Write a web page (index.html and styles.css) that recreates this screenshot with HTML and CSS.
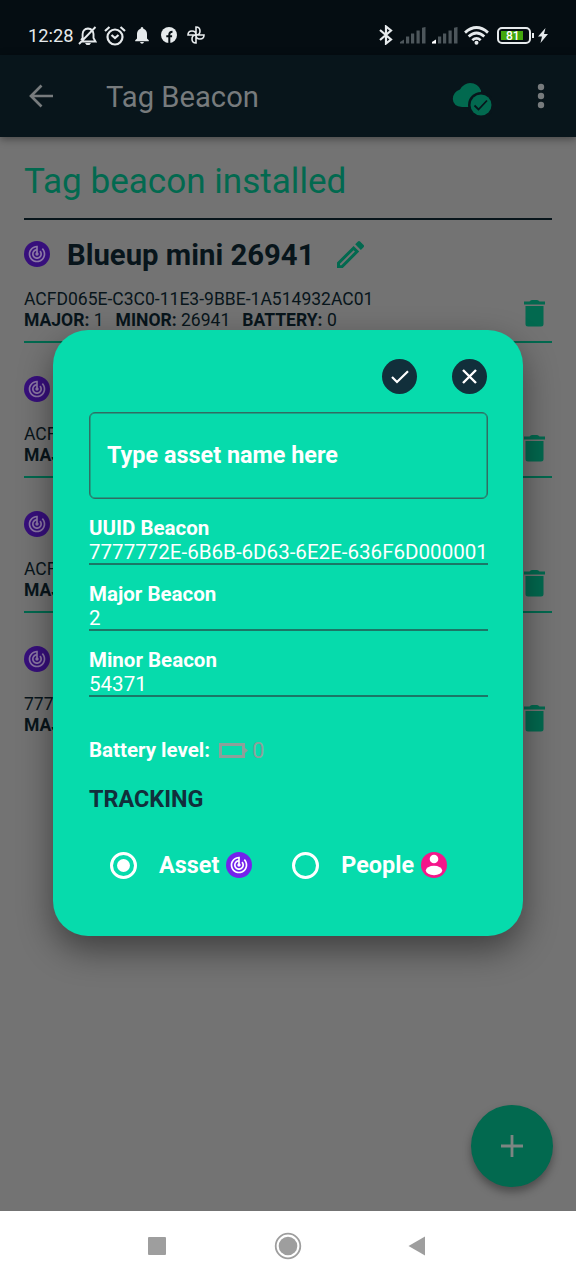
FILE: index.html
```html
<!DOCTYPE html>
<html lang="en">
<head>
<meta charset="utf-8">
<title>Tag Beacon</title>
<link rel="stylesheet" href="styles.css">
</head>
<body>
<svg class="defs" width="0" height="0">
  <symbol id="track" viewBox="0 0 24 24"><path fill="currentColor" d="M19.07 4.93l-1.41 1.41C19.1 7.79 20 9.79 20 12c0 4.42-3.58 8-8 8s-8-3.58-8-8c0-4.08 3.05-7.44 7-7.93v2.02C8.16 6.57 6 9.03 6 12c0 3.31 2.69 6 6 6s6-2.69 6-6c0-1.66-.67-3.16-1.76-4.24l-1.41 1.41C15.55 9.9 16 10.9 16 12c0 2.21-1.79 4-4 4s-4-1.79-4-4c0-1.86 1.28-3.41 3-3.86v2.14c-.6.35-1 .98-1 1.72 0 1.1.9 2 2 2s2-.9 2-2c0-.74-.4-1.38-1-1.72V2h-1C6.48 2 2 6.48 2 12s4.48 10 10 10 10-4.48 10-10c0-2.76-1.12-5.26-2.93-7.07z"/></symbol>
  <symbol id="trash" viewBox="0 0 21 27"><path fill="currentColor" d="M0 1.600h5.500Q6.500 0 8 0h5q1.500 0 2.500 1.600H21v2.800H0zM1.500 6h18v18q0 2.500-2.500 2.500H4Q1.500 26.500 1.500 24z"/></symbol>
  <symbol id="signal" viewBox="0 0 26 17"><path d="M4 12.500v4H0v-1.500zM6 9.500h3.200v7H6zM11 6.500h3.200v10H11zM16.500 3.500h3.200v13h-3.200zM22 .8L25.500 0v16.500H22z" fill="#4d565b"/></symbol>
</svg>
<div class="screen">
  <header class="status">
    <span class="clock">12:28</span>
    <svg class="s-mute" width="20" height="20" viewBox="0 0 20 20" fill="none" stroke="#e6eaec" stroke-width="1.900"><path d="M3.500 15.500h14L15.500 12V8Q15 3 10 2.500 5 3 4.600 8v4l-1.500 2M17.500 1L1 18"/><path d="M7 17h6l-1.500 2h-3z" fill="#e6eaec" stroke="none"/></svg>
    <svg class="s-alarm" width="22" height="20" viewBox="0 0 22 20" fill="none" stroke="#e6eaec" stroke-width="2.200"><circle cx="11" cy="11" r="7.500"/><path d="M7.500 9l3.500 3 3.500-3M1 5l4.500-4M21 5l-4.500-4"/></svg>
    <svg class="s-bell" width="14" height="17" viewBox="0 0 14 17" fill="#e6eaec"><path d="M7 0q1.400 0 1.400 1.700Q12 3 12 7v4.500l1.800 1.800v1H.2v-1L2 11.500V7q0-4 3.600-5.300Q5.600 0 7 0zM5 15h4q-.5 1.800-2 1.800T5 15z"/></svg>
    <svg class="s-fb" width="16" height="16" viewBox="0 0 16 16"><circle cx="8" cy="8" r="8" fill="#e6eaec"/><path d="M8.300 16V7.500q0-2.800 3.200-2.800M5.300 9.200h5.800" fill="none" stroke="#050d12" stroke-width="2"/></svg>
    <svg class="s-fan" width="18" height="18" viewBox="0 0 18 18" fill="none" stroke="#e6eaec" stroke-width="1.600"><path d="M9 9V1Q13 1 13 5T9 9zM9 9h8q0 4-4 4T9 9zM9 9v8q-4 0-4-4t4-4zM9 9H1q0-4 4-4t4 4z"/></svg>
    <span class="grow"></span>
    <svg class="s-bt" width="14" height="20" viewBox="0 0 14 20" fill="none" stroke="#e6eaec" stroke-width="2.200"><path d="M1 5l11 9.500L7 18.500v-17l5 4L1 15"/></svg>
    <svg class="s-sig1" width="26" height="17"><use href="#signal"/></svg>
    <svg class="s-sig2" width="26" height="17"><use href="#signal"/><path d="M4 12.500v4H0v-1.500z" fill="#fff"/></svg>
    <svg class="s-wifi" width="25" height="19" viewBox="0 0 24 18" fill="none" stroke="#e6eaec" stroke-width="2.700"><path d="M1 6.200Q12-3.500 23 6.200M4.500 10Q12 3.300 19.500 10M8 13.500q4-3.500 8 0"/><circle cx="12" cy="16" r="1.900" fill="#e6eaec" stroke="none"/></svg>
    <div class="batt"><span class="charge">81</span></div>
    <svg class="s-bolt" width="10" height="15" viewBox="0 0 10 15"><path d="M7.500 0L0 8.500h4L2.500 15 10 6H6z" fill="#e6eaec"/></svg>
  </header>
  <div class="appbar">
    <svg class="back" width="24" height="24" viewBox="0 0 24 24" fill="none" stroke="#777b7d" stroke-width="2.700"><path d="M24 12H2M12.500 1.500L2 12l10.500 10.500"/></svg>
    <h1>Tag Beacon</h1>
    <span class="grow"></span>
    <svg class="cloud" width="40" height="34" viewBox="0 0 40 34"><path d="M10 25Q1 24 .8 17 1 10 8 7.500 12 1 18 1q8 0 11 7.500V25z" fill="#02694f"/><circle cx="29" cy="23" r="13" fill="#08151b"/><circle cx="29" cy="23" r="10.500" fill="#02694f"/><path d="M22.500 23.500l4 4 8.500-9" fill="none" stroke="#08151b" stroke-width="1.800"/></svg>
    <svg class="dots" width="8" height="26" viewBox="0 0 8 26" fill="#777b7d"><circle cx="4" cy="4" r="3.200"/><circle cx="4" cy="13" r="3.200"/><circle cx="4" cy="22" r="3.200"/></svg>
  </div>
  <main class="content">
    <h2>Tag beacon installed</h2>
    <section class="item first">
      <div class="name"><span class="badge"><svg width="20" height="20"><use href="#track"/></svg></span><b>Blueup mini 26941</b>
        <svg class="pencil" width="27" height="27" viewBox="3 2.900 18 18"><path fill="#02694f" fill-rule="evenodd" d="M3 17.250V21h3.750L17.810 9.940l-3.750-3.750L3 17.250zM5.920 19H5v-.92l9.060-9.060.92.92L5.920 19zM20.710 7.040a1 1 0 000-1.410l-2.340-2.340a1 1 0 00-1.410 0l-1.830 1.830 3.750 3.750 1.830-1.830z"/></svg></div>
      <div class="info"><div><p>ACFD065E-C3C0-11E3-9BBE-1A514932AC01</p><p class="nums"><span><b>MAJOR:</b> 1</span><span><b>MINOR:</b> 26941</span><span><b>BATTERY:</b> 0</span></p></div><svg class="trash" width="21" height="27"><use href="#trash"/></svg></div>
    </section>
    <section class="item">
      <div class="name"><span class="badge"><svg width="20" height="20"><use href="#track"/></svg></span></div>
      <div class="info"><div><p>ACFD</p><p class="nums"><b>MAJOR:</b></p></div><svg class="trash" width="21" height="27"><use href="#trash"/></svg></div>
    </section>
    <section class="item">
      <div class="name"><span class="badge"><svg width="20" height="20"><use href="#track"/></svg></span></div>
      <div class="info"><div><p>ACFD</p><p class="nums"><b>MAJOR:</b></p></div><svg class="trash" width="21" height="27"><use href="#trash"/></svg></div>
    </section>
    <section class="item last">
      <div class="name"><span class="badge"><svg width="20" height="20"><use href="#track"/></svg></span></div>
      <div class="info"><div><p>7777</p><p class="nums"><b>MAJOR:</b></p></div><svg class="trash" width="21" height="27"><use href="#trash"/></svg></div>
    </section>
    <div class="fab"><svg width="22" height="22" viewBox="0 0 22 22"><path d="M11 0v22M0 11h22" stroke="#7d8582" stroke-width="2.800"/></svg></div>
  </main>
  <nav class="nav">
    <svg width="18" height="18"><rect width="18" height="18" rx="1" fill="#9e9e9e"/></svg>
    <svg class="home" width="28" height="28"><circle cx="14" cy="14" r="12.300" fill="none" stroke="#9e9e9e" stroke-width="1.800"/><circle cx="14" cy="14" r="9.300" fill="#9e9e9e"/></svg>
    <svg width="18" height="20"><path d="M17 .5v19L.5 10z" fill="#9e9e9e"/></svg>
  </nav>
  <div class="dialog">
    <div class="actions">
      <span class="round"><svg width="18" height="14" viewBox="0 0 18 14" fill="none" stroke="#fff" stroke-width="2.200"><path d="M1 7l5 5L17 1.200"/></svg></span>
      <span class="round"><svg width="15" height="15" viewBox="0 0 15 15" fill="none" stroke="#fff" stroke-width="2.400"><path d="M1 1l13 13M14 1L1 14"/></svg></span>
    </div>
    <div class="input">Type asset name here</div>
    <div class="field"><label>UUID Beacon</label><span>7777772E-6B6B-6D63-6E2E-636F6D000001</span></div>
    <div class="field"><label>Major Beacon</label><span>2</span></div>
    <div class="field"><label>Minor Beacon</label><span>54371</span></div>
    <div class="level"><b>Battery level:</b><svg width="29" height="15" viewBox="0 0 29 15"><path d="M1.500 1.500h23v12h-23z" fill="none" stroke="#8e9f9a" stroke-width="3"/><path d="M25 4l4 3.500-4 3.500z" fill="#8e9f9a"/></svg><span>0</span></div>
    <div class="tracking">TRACKING</div>
    <div class="radios">
      <span class="radio on"></span><b class="asset">Asset</b><span class="badge bright"><svg width="20" height="20"><use href="#track"/></svg></span>
      <span class="radio second"></span><b class="people">People</b>
      <svg width="26" height="26" viewBox="0 0 26 26"><circle cx="13" cy="13" r="13" fill="#f5168a"/><circle cx="13" cy="7" r="4.300" fill="#fff"/><ellipse cx="13" cy="18.500" rx="8.200" ry="4.700" fill="#fff"/></svg>
    </div>
  </div>
</div>
</body>
</html>
```

FILE: styles.css
```css
* { box-sizing: border-box; margin: 0; padding: 0; }
body { font-family: Roboto, "Liberation Sans", sans-serif; }
svg { display: block; flex: none; }
.defs { position: absolute; }
.screen { position: relative; width: 576px; height: 1280px; display: flex; flex-direction: column; overflow: hidden; background: #737373; }
.grow { flex: 1; }
.status { height: 55px; flex: none; background: #050d12; color: #e6eaec; display: flex; align-items: flex-start; padding: 26px 28px 0 28px; }
.clock { font-size: 18.300px; font-weight: 400; width: 50px; line-height: 20px; white-space: nowrap; }
.s-alarm { margin-left: 6px; }
.s-bell { margin: 1px 0 0 9px; }
.s-fb { margin: 1px 0 0 12px; }
.s-fan { margin-left: 10px; }
.s-bt { margin-top: -1px; }
.s-sig1 { margin: 1px 0 0 7px; }
.s-sig2 { margin: 1px 0 0 6px; }
.s-wifi { margin-left: 6px; }
.batt { position: relative; width: 34px; height: 17px; border: 2px solid #e6eaec; border-radius: 5px; padding: 2px; margin: 1px 0 0 8px; }
.batt::after { content: ""; position: absolute; left: 33px; top: 4px; width: 2px; height: 5px; background: #e6eaec; }
.charge { display: block; width: 22px; height: 9px; background: #42a70d; color: #fff; font-size: 12px; line-height: 10px; font-weight: 500; padding-left: 5px; }
.s-bolt { margin: 2px 0 0 7px; }
.appbar { height: 82px; flex: none; background: #08151b; display: flex; align-items: center; padding: 0 31px 0 29px; box-shadow: 0 2px 8px rgba(0,0,0,.4); position: relative; }
.appbar h1 { font-size: 29.200px; font-weight: 400; color: #777b7d; margin: 1px 0 0 53px; white-space: nowrap; }
.cloud { margin: 6px 45px 0 0; }
.content { flex: 1; padding: 0 24px; color: #08151b; display: flex; flex-direction: column; position: relative; }
h2 { height: 83px; flex: none; line-height: 44px; padding-top: 22px; font-size: 35.100px; font-weight: 400; color: #02694f; border-bottom: 2px solid #08151b; white-space: nowrap; }
.item { height: 135px; flex: none; border-bottom: 2px solid #02694f; padding-top: 33px; }
.item.first { height: 123px; padding-top: 21px; }
.item.last { border: 0; }
.name { display: flex; align-items: center; height: 26px; }
.name b { font-size: 29.300px; line-height: 26px; margin: 2px 0 0 17px; white-space: nowrap; }
.badge { width: 26px; height: 26px; border-radius: 50%; background: #370f7c; color: #8b78a5; display: flex; align-items: center; justify-content: center; flex: none; }
.badge.bright { background: #7422ec; color: #fff; }
.pencil { margin-left: 23px; }
.info { display: flex; justify-content: space-between; margin-top: 22px; }
.info p { font-size: 17.550px; line-height: 21px; white-space: nowrap; }
.nums { display: flex; gap: 12px; }
.trash { margin: 11px 7px 0 0; color: #02694f; }
.fab { position: absolute; right: 23px; bottom: 24px; width: 82px; height: 82px; border-radius: 50%; background: #02694f; display: flex; align-items: center; justify-content: center; box-shadow: 0 5px 9px rgba(0,0,0,.35); }
.nav { height: 69px; flex: none; background: #fff; display: flex; align-items: center; justify-content: space-between; padding: 0 150px 0 148px; }
.home { margin-left: 2px; }
.dialog { position: absolute; left: 53px; top: 330px; width: 470px; height: 606px; border-radius: 35px; background: #06dbac; color: #fff; padding: 29px 35px 0 36px; box-shadow: 0 14px 34px rgba(0,0,0,.45); }
.actions { display: flex; justify-content: flex-end; gap: 35px; padding-right: 1px; }
.round { width: 35px; height: 35px; border-radius: 50%; background: #112f3b; display: flex; align-items: center; justify-content: center; }
.input { height: 87px; margin-top: 18px; border: 1px solid #316d63; box-shadow: inset 0 0 0 .5px #316d63; border-radius: 6px; padding-left: 17px; line-height: 85px; font-size: 23.400px; font-weight: 700; white-space: nowrap; }
.field { height: 66px; padding-top: 18px; border-bottom: 2px solid #1b7767; display: flex; flex-direction: column; font-size: 20.550px; line-height: 23px; white-space: nowrap; }
.field label { font-weight: 700; font-size: 20.500px; }
.field span { margin-top: 1px; }
.level { display: flex; align-items: center; margin-top: 41px; height: 24px; font-size: 20.500px; }
.level svg { margin-left: 9px; }
.level span { color: #8e9f9a; font-size: 22px; margin-left: 4px; }
.tracking { margin-top: 22px; font-size: 23.400px; line-height: 30px; font-weight: 700; color: #112f3b; }
.radios { display: flex; align-items: center; height: 28px; margin: 37px 0 0 21px; font-size: 23.400px; white-space: nowrap; }
.radio { width: 27px; height: 27px; border: 3px solid #fff; border-radius: 50%; padding: 4px; flex: none; }
.radio.on::after { content: ""; display: block; width: 13px; height: 13px; border-radius: 50%; background: #fff; }
.asset, .people { margin-left: 22px; margin-right: 7px; }
.second { margin-left: 40px; }
```
